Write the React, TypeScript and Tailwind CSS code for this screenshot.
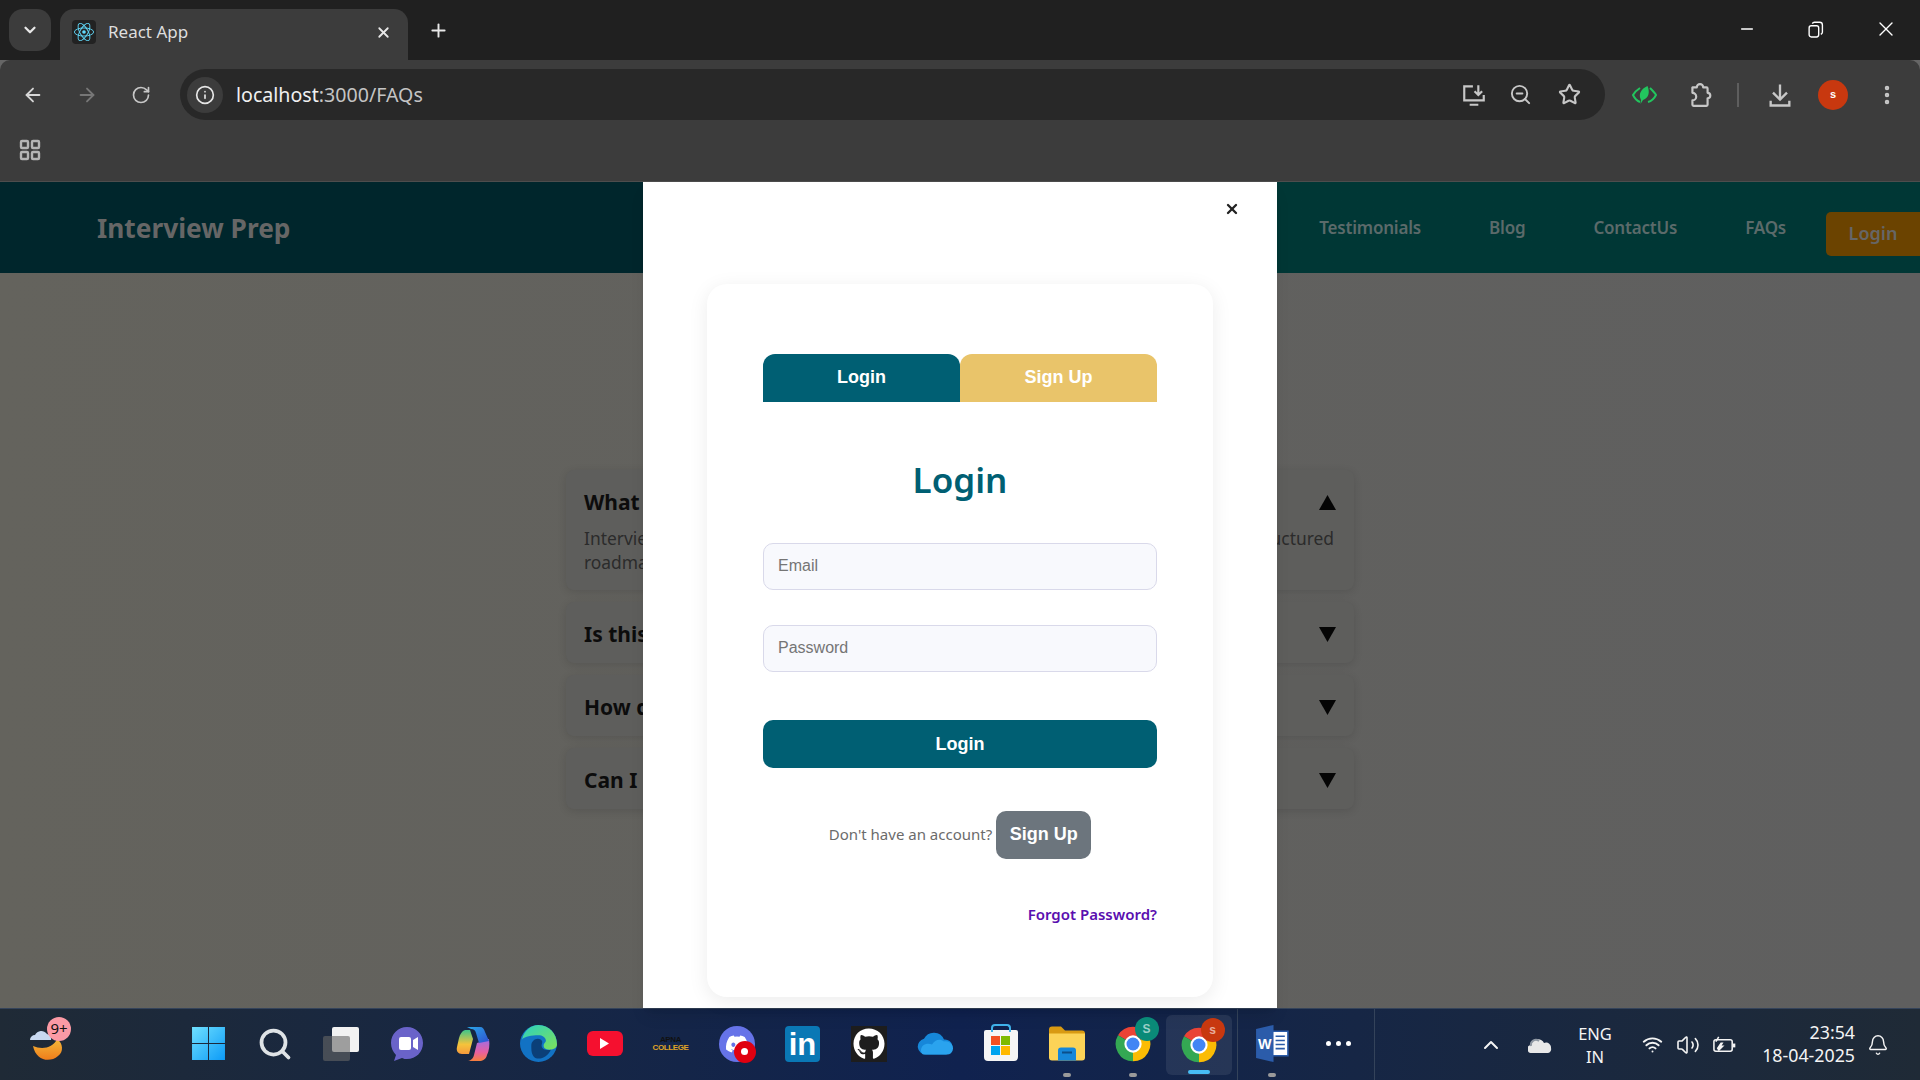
import {
  ArrowLeft,
  ArrowRight,
  Bell,
  ChevronDown,
  ChevronUp,
  Info,
  LayoutGrid,
  Minus,
  MoreVertical,
  Plus,
  RotateCw,
  Search,
  Star,
  Volume2,
  Wifi,
  X,
  ZoomOut,
} from "lucide-react";
import { FaDiscord, FaGithub } from "react-icons/fa";
import type { ReactNode } from "react";

const uiFont = "font-['Noto_Sans','Open_Sans',sans-serif]";
const arial = "font-['Liberation_Sans',Arial,sans-serif]";

function ReactLogo() {
  return (
    <div className="flex h-6 w-6 items-center justify-center rounded-sm bg-[#222]">
      <svg viewBox="-12 -12 24 24" className="h-[22px] w-[22px]" fill="none" stroke="#61dafb" strokeWidth="1">
        <circle r="2" fill="#61dafb" stroke="none" />
        <ellipse rx="10.5" ry="4.4" />
        <ellipse rx="10.5" ry="4.4" transform="rotate(60)" />
        <ellipse rx="10.5" ry="4.4" transform="rotate(120)" />
      </svg>
    </div>
  );
}

function TopBar() {
  return (
    <div className="flex h-[60px] shrink-0 items-end bg-[#202020] pl-[9px] text-[#e8e8e8]">
      <div className="mb-[9px] flex h-[42px] w-[42px] items-center justify-center rounded-[14px] bg-[#3c3c3c]">
        <ChevronDown size={18} strokeWidth={3} />
      </div>
      <div className={`ml-[9px] flex h-[51px] w-[348px] items-center rounded-t-[14px] bg-[#3c3c3c] pb-[5px] pl-3 pr-[16px] ${uiFont}`}>
        <ReactLogo />
        <span className="ml-3 flex-1 text-[17px] text-[#dedede]">React App</span>
        <X size={17} strokeWidth={2.5} />
      </div>
      <div className="mb-[19px] ml-[20px]">
        <Plus size={21} strokeWidth={2.2} />
      </div>
      <div className="mb-[19px] ml-auto flex items-center pr-[22px]">
        <Minus size={18} strokeWidth={2.2} className="mr-[51px] text-white" />
        <svg viewBox="0 0 16 16" className="mr-[50px] h-[17px] w-[17px]" fill="none" stroke="#fff" strokeWidth="1.3">
          <rect x="2" y="4.5" width="9" height="10.5" rx="2" />
          <path d="M5 2.5 C5.5 1.5 6 1.2 7 1.2 H12 C13.5 1.2 14.5 2.2 14.5 3.7 V10.5 C14.5 11.5 14 12 13 12.5" />
        </svg>
        <X size={24} strokeWidth={1.4} className="text-white" />
      </div>
    </div>
  );
}

function Toolbar() {
  return (
    <div className="shrink-0 rounded-t-[10px] border-b border-[#4d4d4d] bg-[#3c3c3c]">
      <div className="flex h-[60px] items-end text-[#c7c7c7]">
        <div className="flex h-[51px] w-[180px] items-center">
          <ArrowLeft size={22} className="ml-[22px] text-[#d6d6d6]" />
          <ArrowRight size={22} className="ml-[32px] text-[#777]" />
          <RotateCw size={20} className="ml-[33px]" />
        </div>
        <div className={`flex h-[51px] w-[1425px] items-center rounded-full bg-[#282828] pl-[7px] pr-[24px] ${uiFont}`}>
          <div className="flex h-[36px] w-[36px] items-center justify-center rounded-full bg-[#3c3c3c]">
            <Info size={20} className="text-[#e6e6e6]" />
          </div>
          <span className="ml-[13px] flex-1 text-[19.6px] text-[#c4c4c4]">
            <span className="text-[#f0f0f0]">localhost</span>:3000/FAQs
          </span>
          <svg viewBox="0 0 24 24" className="h-[26px] w-[26px]" fill="none" stroke="#c7c7c7" strokeWidth="2">
            <path d="M11 4H3v13h18v-5M8 21h8M16 3v9m-3.5-3.5L16 12l3.5-3.5" />
          </svg>
          <ZoomOut size={23} className="ml-[22px]" />
          <Star size={23} strokeWidth={2.2} className="ml-[26px]" />
        </div>
        <div className="flex h-[51px] flex-1 items-center">
          <svg viewBox="0 0 25 18" className="ml-[27px] h-[18px] w-[25px]" fill="none" stroke="#22c55e" strokeWidth="2">
            <path d="M8 2 C5 4 2 7 1 9 C2 11 5 15 8 16" />
            <path d="M18 2 C20 4 23 7 24 9 C23 11 20 15 16 16" />
            <path d="M15.5 0 C9 3 6 8 9 14 L8.5 18 L11 14 C17 12 18 6 15.5 0Z" fill="#22c55e" stroke="none" />
          </svg>
          <svg viewBox="0 0 24 24" className="ml-[30px] h-[26px] w-[26px]" fill="none" stroke="#c7c7c7" strokeWidth="2" strokeLinejoin="round">
            <path d="M5 5h4a3 3 0 0 1 6 0h3a1 1 0 0 1 1 1v4a2.5 2.5 0 0 1 0 5v6a1 1 0 0 1-1 1H6a1 1 0 0 1-1-1v-4a3.5 3.5 0 0 0 0-7V6a1 1 0 0 1 0-1Z" />
          </svg>
          <div className="ml-[24px] h-[24px] w-[2px] bg-[#5e5e5e]" />
          <svg viewBox="0 0 24 24" className="ml-[27px] h-[28px] w-[28px]" fill="none" stroke="#c7c7c7" strokeWidth="2">
            <path d="M12 3v13m-6-6 6 6 6-6M4 17v4h16v-4" />
          </svg>
          <div className={`ml-[24px] flex h-[30px] w-[30px] items-center justify-center rounded-full bg-[#c8380f] text-[11px] font-semibold text-white ${arial}`}>
            s
          </div>
          <MoreVertical size={24} strokeWidth={2.5} className="ml-[27px]" />
        </div>
      </div>
      <div className="flex h-[61px] items-center pb-[2px] pl-[18px] text-[#b4b4b4]">
        <LayoutGrid size={24} strokeWidth={2.4} />
      </div>
    </div>
  );
}

const navLinks = ["Testimonials", "Blog", "ContactUs", "FAQs"];

function SiteHeader() {
  return (
    <header className={`flex h-[91px] shrink-0 items-center bg-gradient-to-r from-[#00262c] from-35% to-[#003735] to-65% pl-[97px] ${uiFont}`}>
      <div className="pt-[2px] text-[26.3px] font-bold text-[#666]">Interview Prep</div>
      <nav className="ml-auto flex items-center gap-[68px] pt-[1px] text-[17px] font-semibold tracking-[-0.2px] text-[#5b6a6a]">
        {navLinks.map((link) => (
          <span key={link}>{link}</span>
        ))}
      </nav>
      <div className="ml-[40px] mt-[12px] flex h-[44px] w-[94px] items-center justify-center rounded-l-[5px] bg-[#6b4300] text-[18px] font-semibold text-[#666]">
        Login
      </div>
    </header>
  );
}

const faqs = [
  { q: "What is Interview Prep?", open: true },
  { q: "Is this platform free to use?", open: false },
  { q: "How do I track my progress?", open: false },
  { q: "Can I practice mock interviews?", open: false },
];

function FaqList() {
  return (
    <div className={`flex w-[788px] flex-col gap-3 pt-[197px] ${uiFont}`}>
      {faqs.map((faq) => (
        <div key={faq.q} className="rounded-lg bg-[#5e5e5c] px-[18px] pb-[13px] pt-[16px] shadow-[0_2px_8px_rgba(0,0,0,0.12)]">
          <div className="flex items-center justify-between text-[#0c0c0c]">
            <span className="text-[21px] font-bold leading-[32px]">{faq.q}</span>
            <svg viewBox="0 0 17 15" className="h-[15px] w-[17px]" fill="#050505">
              <path d={faq.open ? "M8.5 0 17 15H0Z" : "M8.5 15 0 0H17Z"} />
            </svg>
          </div>
          {faq.open && (
            <p className="mb-[3px] mt-[8px] whitespace-nowrap text-[17.4px] leading-[24px] text-[#2b2b2b]">
              Interview Prep is your personal guide to cracking technical interviews, with a well structured
              <br />
              roadmap and resources.
            </p>
          )}
        </div>
      ))}
    </div>
  );
}

function LoginModal() {
  const inputClass = `h-[47px] rounded-[10px] border border-[#d9d9ea] bg-[#f8f9fd] px-[14px] pb-[2px] text-[16px] placeholder:text-[#757575] ${arial}`;
  return (
    <div className="absolute inset-0 flex justify-center">
      <div className="flex w-[634px] flex-col items-center bg-white pt-[102px] shadow-lg">
        <div className="relative flex h-[713px] w-[506px] flex-col rounded-[20px] bg-white px-[56px] pt-[70px] shadow-[0_4px_20px_rgba(0,0,0,0.08)]">
          <button className="absolute -top-[83px] right-[-27px] text-[#222]">
            <X size={16} strokeWidth={3.5} />
          </button>
          <div className={`flex h-[48px] text-[18px] font-bold text-white ${arial}`}>
            <div className="flex flex-1 items-center justify-center rounded-t-xl bg-[#005f73] pb-[1px]">Login</div>
            <div className="flex flex-1 items-center justify-center rounded-t-xl bg-[#e9c46a] pb-[1px]">Sign Up</div>
          </div>
          <h2 className={`mt-[51px] text-center text-[35px] font-semibold leading-[54px] text-[#005f73] ${uiFont}`}>Login</h2>
          <input readOnly placeholder="Email" className={`mt-[36px] ${inputClass}`} />
          <input readOnly placeholder="Password" className={`mt-[35px] ${inputClass}`} />
          <button className={`mt-[48px] h-[48px] rounded-[10px] bg-[#005f73] text-[18px] font-bold text-white ${arial}`}>Login</button>
          <div className="mt-[43px] flex items-center justify-center">
            <span className={`pb-[2px] text-[15px] text-[#6b6b6b] ${uiFont}`}>Don't have an account?</span>
            <button className={`ml-[4px] h-[48px] w-[95px] rounded-[10px] bg-[#6c757d] pb-[2px] text-[18px] font-bold text-white ${arial}`}>Sign Up</button>
          </div>
          <a className={`mt-[44px] text-right text-[15px] font-semibold text-[#5a0fb0] ${uiFont}`}>Forgot Password?</a>
        </div>
      </div>
    </div>
  );
}

function ChromeIcon({ badge, badgeClass }: { badge: string; badgeClass: string }) {
  return (
    <div className="relative h-[36px] w-[36px]">
      <svg viewBox="0 0 100 100" className="h-full w-full">
        <path d="M50 50 8.4 26A48 48 0 0 1 91.6 26Z" fill="#ea4335" />
        <path d="M50 50 91.6 26A48 48 0 0 1 50 98Z" fill="#fbbc04" />
        <path d="M50 50 50 98A48 48 0 0 1 8.4 26Z" fill="#34a853" />
        <circle cx="50" cy="50" r="24" fill="#fff" />
        <circle cx="50" cy="50" r="18" fill="#4285f4" />
      </svg>
      <div className={`absolute -right-[8px] -top-[9px] flex h-[24px] w-[24px] items-center justify-center rounded-full text-[12px] font-bold text-white/60 ${badgeClass} ${arial}`}>
        {badge}
      </div>
    </div>
  );
}

const taskIcons: { key: string; node: ReactNode; running?: boolean; active?: boolean }[] = [
  {
    key: "start",
    node: (
      <svg viewBox="0 0 34 34" className="h-[35px] w-[35px]">
        <defs>
          <linearGradient id="win" x1="0" y1="0" x2="1" y2="1">
            <stop offset="0" stopColor="#6fe0ff" />
            <stop offset="1" stopColor="#0c9bf7" />
          </linearGradient>
        </defs>
        <path d="M1 1h15.5v15.5H1zM17.5 1H33v15.5H17.5zM1 17.5h15.5V33H1zM17.5 17.5H33V33H17.5z" fill="url(#win)" />
      </svg>
    ),
  },
  { key: "search", node: <Search size={36} strokeWidth={2.5} className="text-[#dfe3e6]" /> },
  {
    key: "taskview",
    node: (
      <div className="relative h-[34px] w-[36px]">
        <div className="absolute right-0 top-0 h-[25px] w-[27px] rounded-[2px] bg-[#f2f2f2]" />
        <div className="absolute bottom-0 left-0 h-[25px] w-[27px] rounded-[2px] bg-[#666]/60" />
      </div>
    ),
  },
  {
    key: "meet",
    node: (
      <svg viewBox="0 0 34 36" className="h-[36px] w-[34px]">
        <path d="M17 1C8 1 1 8 1 17c0 5 2 9 5 12l-2 6 8-3c2 1 3 1 5 1 9 0 16-7 16-16S26 1 17 1Z" fill="#6a63c9" />
        <rect x="9" y="11" width="12" height="13" rx="2" fill="#fff" />
        <path d="m23 14 5-3v13l-5-3z" fill="#fff" />
      </svg>
    ),
  },
  {
    key: "copilot",
    node: (
      <svg viewBox="0 0 34 36" className="h-[36px] w-[34px]">
        <defs>
          <linearGradient id="copA" x1="0" y1="0" x2="1" y2="1">
            <stop offset="0" stopColor="#2aa8e8" />
            <stop offset="1" stopColor="#2f4fd0" />
          </linearGradient>
          <linearGradient id="copB" x1="0" y1="0" x2="0" y2="1">
            <stop offset="0" stopColor="#3fc58a" />
            <stop offset="0.6" stopColor="#f5c33b" />
            <stop offset="1" stopColor="#f59a3c" />
          </linearGradient>
          <linearGradient id="copC" x1="0" y1="0" x2="0" y2="1">
            <stop offset="0" stopColor="#9b6fe8" />
            <stop offset="0.6" stopColor="#e85fa0" />
            <stop offset="1" stopColor="#f57f3c" />
          </linearGradient>
        </defs>
        <path d="M9 4c-3 1-5 4-6 8l-2 9c-1 4 1 7 5 7h7l4-15-3-9Z" fill="url(#copB)" />
        <path d="M33 13c1 6 0 12-2 16-1 4-4 6-8 6H11c3 0 6-2 7-6l3-12Z" fill="url(#copC)" />
        <path d="M11 1h13c3 0 4 2 5 5l4 9-10 2-3-10c-1-3-2-4-5-4Z" fill="url(#copA)" />
      </svg>
    ),
  },
  {
    key: "edge",
    node: (
      <svg viewBox="0 0 36 36" className="h-[37px] w-[37px]">
        <defs>
          <linearGradient id="edgeA" x1="0" y1="0" x2="1" y2="1">
            <stop offset="0" stopColor="#2bd0c0" />
            <stop offset="1" stopColor="#7ee05a" />
          </linearGradient>
        </defs>
        <circle cx="18" cy="18" r="18" fill="#1272c4" />
        <path d="M2 14C4 5 11 0 18 0c10 0 18 8 18 19 0 3-3 5-7 5-5 0-6-2-6-4 0-3 3-3 2-6-1-2-3-4-7-4C11 10 5 11 2 14Z" fill="url(#edgeA)" />
        <path d="M11 20c0-5 5-8 9-6 3 2 1 4 1 6 0 4 5 5 9 4-3 7-10 10-15 8C11 30 11 24 11 20Z" fill="#0b3f78" />
      </svg>
    ),
  },
  {
    key: "youtube",
    node: (
      <div className="flex h-[25px] w-[36px] items-center justify-center rounded-[6px] bg-[#f5102f]">
        <svg viewBox="0 0 10 12" className="h-[11px] w-[9px]" fill="#fff">
          <path d="M0 0 10 6 0 12Z" />
        </svg>
      </div>
    ),
  },
  {
    key: "apna",
    node: (
      <div className={`flex flex-col items-center text-[8px] font-bold leading-[8px] tracking-[-0.4px] ${arial}`}>
        <span className="text-[#111]">APNA</span>
        <span className="text-[#e0a526]">COLLEGE</span>
      </div>
    ),
  },
  {
    key: "discord",
    node: (
      <div className="relative flex h-[36px] w-[36px] items-center justify-center rounded-full bg-[#6673e8]">
        <FaDiscord size={24} className="text-white" />
        <div className="absolute -bottom-[1px] -right-[1px] flex h-[22px] w-[22px] items-center justify-center rounded-full bg-[#e00010]">
          <div className="h-[7px] w-[7px] rounded-full bg-white" />
        </div>
      </div>
    ),
  },
  {
    key: "linkedin",
    node: (
      <div className={`flex h-[36px] w-[35px] items-center justify-center rounded-[4px] bg-[#0a78b5] pt-[1px] text-[31px] font-bold leading-none text-white ${arial}`}>
        in
      </div>
    ),
  },
  {
    key: "github",
    node: (
      <div className="flex h-[36px] w-[36px] items-center justify-center bg-[#1d1d1d]">
        <FaGithub size={32} className="text-white" />
      </div>
    ),
  },
  {
    key: "onedrive",
    node: (
      <svg viewBox="0 0 36 24" className="h-[25px] w-[36px]">
        <path d="M9 23a8 8 0 0 1-2-15.8A11 11 0 0 1 27 8a7.5 7.5 0 0 1 2 15Z" fill="#1687d9" />
        <path d="M7 23h22a6 6 0 0 0 7-6c0-4-4-8-9-7-4-3-9-2-12 3-6-2-11 1-11 6 0 2 1 4 3 4Z" fill="#2aa3ee" />
      </svg>
    ),
  },
  {
    key: "store",
    node: (
      <div className="relative mt-[3px] flex h-[31px] w-[34px] items-center justify-center rounded-b-[4px] rounded-t-[2px] bg-[#f5f5f5]">
        <div className="absolute -top-[6px] left-[7px] h-[8px] w-[20px] rounded-t-[4px] border-2 border-b-0 border-[#3fb2ea]" />
        <div className="grid grid-cols-2 gap-[1px]">
          <div className="h-[9px] w-[9px] bg-[#f25022]" />
          <div className="h-[9px] w-[9px] bg-[#7fba00]" />
          <div className="h-[9px] w-[9px] bg-[#00a4ef]" />
          <div className="h-[9px] w-[9px] bg-[#ffb900]" />
        </div>
      </div>
    ),
  },
  {
    key: "explorer",
    running: true,
    node: (
      <svg viewBox="0 0 36 34" className="h-[35px] w-[36px]">
        <path d="M0 3c0-2 1-3 3-3h9l4 4h17c2 0 3 1 3 3v5H0Z" fill="#d99a12" />
        <path d="M0 7h36v24c0 2-1 3-3 3H3c-2 0-3-1-3-3Z" fill="#fcd357" />
        <path d="M9 34V24c0-2 1-3 3-3h12c2 0 3 1 3 3v10Z" fill="#1687d9" />
        <rect x="13" y="25" width="10" height="2" fill="#0b4f8a" />
      </svg>
    ),
  },
  { key: "chrome1", running: true, node: <ChromeIcon badge="S" badgeClass="bg-[#0a8a78]" /> },
  { key: "chrome2", active: true, node: <ChromeIcon badge="s" badgeClass="bg-[#c8380f]" /> },
];

function TaskSlot({ children, running, active }: { children: ReactNode; running?: boolean; active?: boolean }) {
  return (
    <div className={`relative flex w-[66px] items-center justify-center ${active ? "h-[60px] rounded-md bg-white/[0.08]" : "h-full pb-[2px]"}`}>
      {children}
      {running && <div className="absolute bottom-[3px] h-[4px] w-[8px] rounded-full bg-[#9a9a9a]" />}
      {active && <div className="absolute bottom-[1px] h-[4px] w-[22px] rounded-full bg-[#47bdf5]" />}
    </div>
  );
}

function Taskbar() {
  return (
    <div className="flex h-[72px] shrink-0 items-center border-t border-[#34435a] bg-gradient-to-r from-[#1f2a36] via-[#10224f] via-50% to-[#1f2a36] text-white">
      <div className="flex w-[175.5px] items-center pl-[30px]">
        <div className="relative h-[40px] w-[40px]">
          <svg viewBox="0 0 40 40" className="h-full w-full">
            <defs>
              <linearGradient id="moon" x1="0" y1="0" x2="0" y2="1">
                <stop offset="0" stopColor="#f4b93a" />
                <stop offset="1" stopColor="#ef7d1a" />
              </linearGradient>
            </defs>
            <path d="M3 21C12 25 23 23 27 14 33 18 34 27 28 31 20 38 6 36 3 21Z" fill="url(#moon)" />
            <path d="M0 15a5 5 0 0 1 5-5 7 7 0 0 1 12-1 5 5 0 0 1 4 6Z" fill="#c8d8f0" />
          </svg>
          <div className={`absolute -right-[1px] -top-[8px] flex h-[24px] w-[24px] items-center justify-center rounded-full bg-[#fb9aa5] text-[15px] text-[#111] ${uiFont}`}>
            9+
          </div>
        </div>
      </div>
      <div className="flex h-full w-[1056.5px] items-center">
        {taskIcons.map((icon) => (
          <TaskSlot key={icon.key} running={icon.running} active={icon.active}>
            {icon.node}
          </TaskSlot>
        ))}
      </div>
      <div className="ml-[5px] h-full w-px bg-[#34435a]" />
      <div className="ml-[1px] flex h-full items-center">
        <TaskSlot running>
          <svg viewBox="0 0 34 36" className="h-[37px] w-[35px]">
            <path d="M12 6h20v24H12z" fill="#fff" stroke="#2a5ba8" strokeWidth="1.5" />
            <path d="M20 11h9M20 15h9M20 19h9M20 23h9" stroke="#2a5ba8" strokeWidth="1.5" />
            <path d="M1 4 18 0v36L1 32Z" fill="#2b5caa" />
            <text x="9.5" y="23" textAnchor="middle" fontSize="14" fontWeight="700" fill="#fff" fontFamily="Liberation Sans">W</text>
          </svg>
        </TaskSlot>
        <TaskSlot>
          <div className="flex gap-[5px]">
            <div className="h-[5px] w-[5px] rounded-full bg-white" />
            <div className="h-[5px] w-[5px] rounded-full bg-white" />
            <div className="h-[5px] w-[5px] rounded-full bg-white" />
          </div>
        </TaskSlot>
      </div>
      <div className="ml-[3px] h-full w-px bg-[#34435a]" />
      <div className={`flex flex-1 items-center text-[#f4f4f4] ${uiFont}`}>
        <ChevronUp size={24} strokeWidth={2} className="ml-[104px]" />
        <svg viewBox="0 0 24 16" className="ml-[25px] h-[16px] w-[24px]">
          <path d="M4 16a4 4 0 0 1-1-8 7 7 0 0 1 13-2 5 5 0 0 1 7 5 4 4 0 0 1-3 5Z" fill="#e8e8e8" />
          <path d="M3 9a5 5 0 0 1 8-5" stroke="#8f98a3" strokeWidth="2" fill="none" />
        </svg>
        <div className="ml-[21px] flex w-[44px] flex-col items-center text-[16.5px] leading-[23px]">
          <span>ENG</span>
          <span>IN</span>
        </div>
        <Wifi size={21} strokeWidth={2.2} className="ml-[25px]" />
        <Volume2 size={24} strokeWidth={1.6} className="ml-[13px]" />
        <svg viewBox="0 0 26 18" className="ml-[12px] h-[19px] w-[25px]" fill="none" stroke="#f4f4f4" strokeWidth="1.6">
          <rect x="2" y="4" width="19" height="12" rx="2" />
          <path d="M23 8v4" strokeWidth="2.5" />
          <path d="M5 13 9 7h3l-2 3h3L7 16" fill="#f4f4f4" stroke="none" />
          <path d="M4 6 7 1" />
        </svg>
        <div className="ml-auto flex flex-col items-end pb-[2px] text-[17.8px] leading-[23px]">
          <span>23:54</span>
          <span>18-04-2025</span>
        </div>
        <Bell size={22} strokeWidth={1.6} className="ml-[12px] mr-[31px]" />
      </div>
    </div>
  );
}

export default function App() {
  return (
    <div className="flex h-screen w-screen flex-col overflow-hidden bg-[#666]">
      <TopBar />
      <Toolbar />
      <div className="relative flex min-h-0 flex-1 flex-col">
        <SiteHeader />
        <main className="flex flex-1 justify-center bg-gradient-to-r from-[#64635d] to-[#5f5f5f]">
          <FaqList />
        </main>
        <LoginModal />
      </div>
      <Taskbar />
    </div>
  );
}
